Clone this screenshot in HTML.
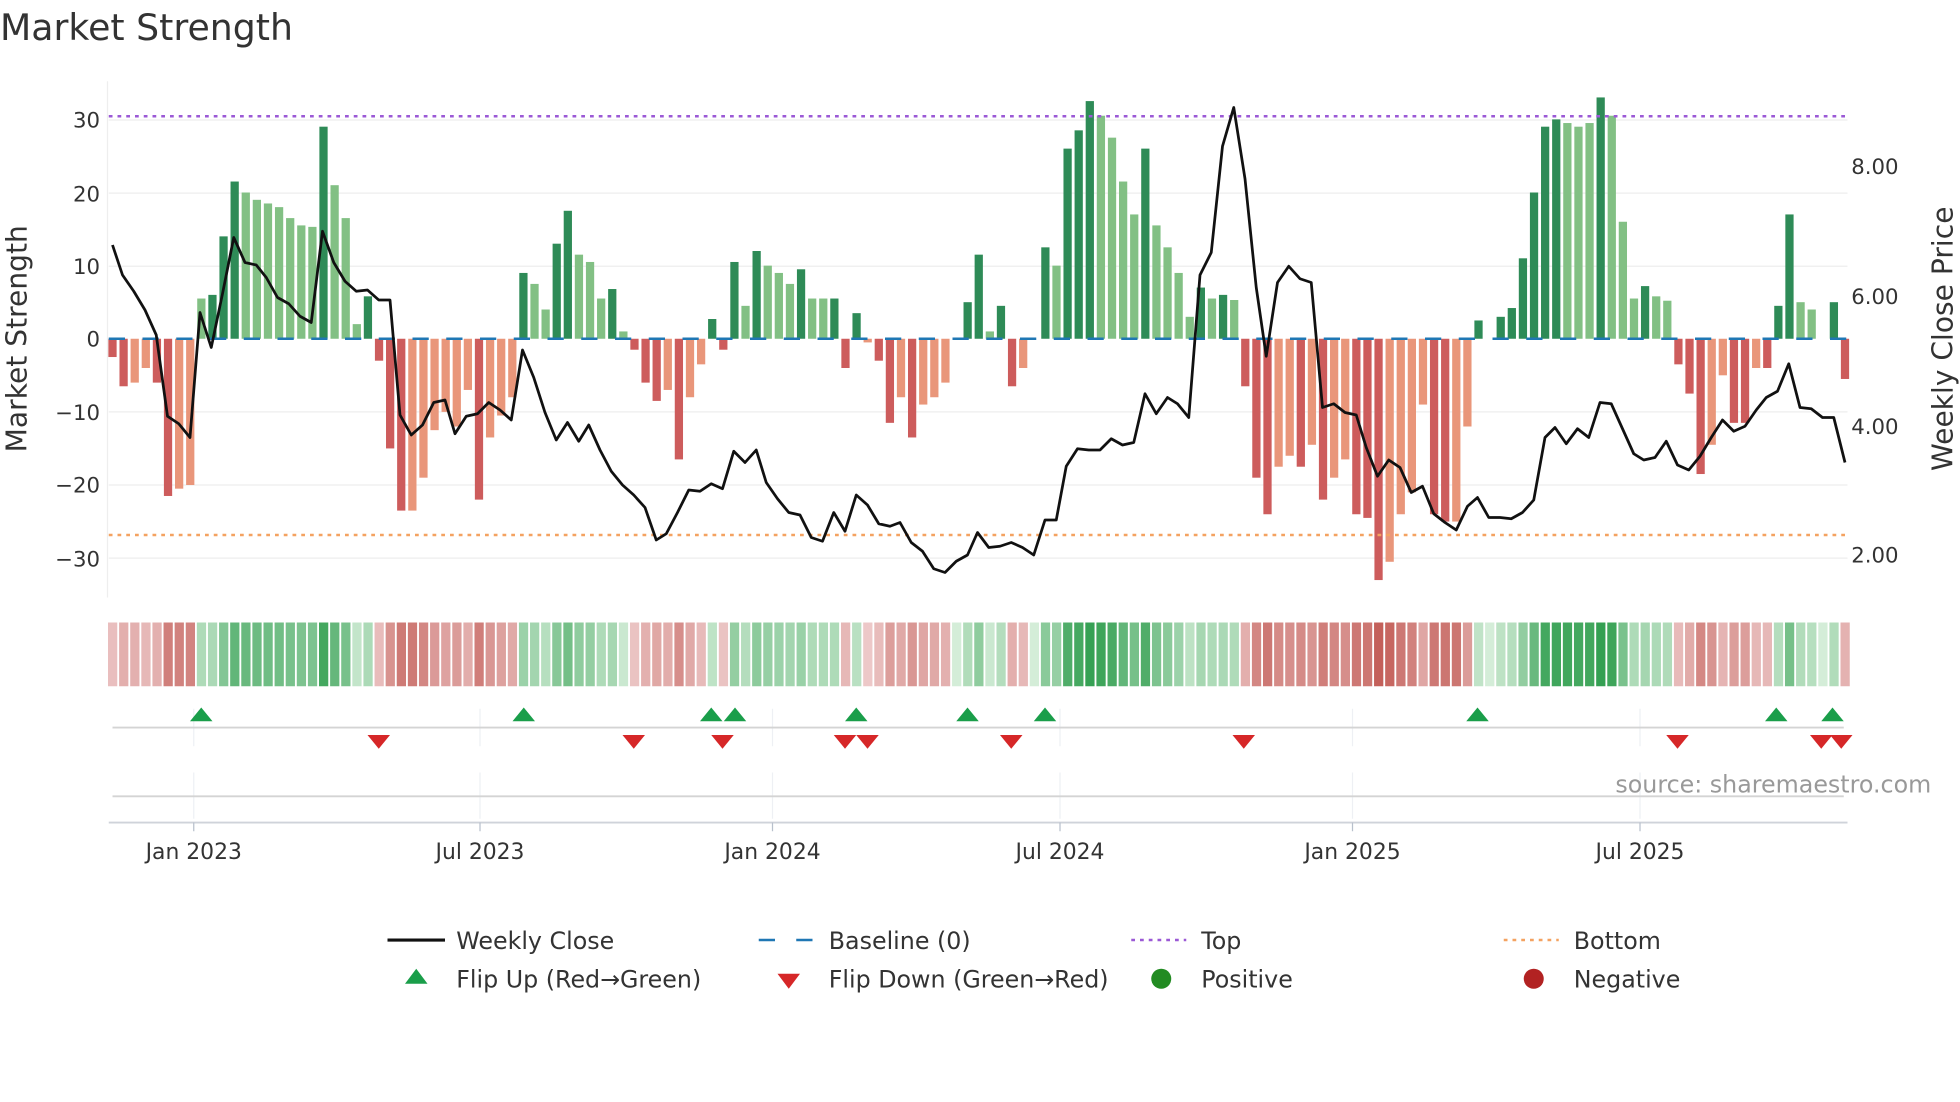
<!DOCTYPE html>
<html><head><meta charset="utf-8"><style>
html,body{margin:0;padding:0;background:#fff;}
svg{display:block;font-family:"DejaVu Sans","Liberation Sans",sans-serif;}
</style></head><body>
<svg id="s" width="1960" height="1102" viewBox="0 0 1568 881.6" xmlns="http://www.w3.org/2000/svg">
<rect width="1568" height="882" fill="#fff"/>
<text x="0" y="32" font-size="29" fill="#333">Market Strength</text>
<g stroke="#eeeeee" stroke-width="1">
<line x1="87" y1="96" x2="1478" y2="96"/><line x1="87" y1="154.5" x2="1478" y2="154.5"/><line x1="87" y1="213" x2="1478" y2="213"/>
<line x1="87" y1="329.5" x2="1478" y2="329.5"/><line x1="87" y1="388" x2="1478" y2="388"/><line x1="87" y1="446.5" x2="1478" y2="446.5"/>
</g>
<line x1="86" y1="65" x2="86" y2="478" stroke="#eeeeee"/>
<g font-size="17" fill="#333" text-anchor="end">
<text x="80" y="102">30</text><text x="80" y="161">20</text><text x="80" y="219">10</text><text x="80" y="277">0</text>
<text x="80" y="336">−10</text><text x="80" y="394">−20</text><text x="80" y="453">−30</text>
</g>
<g font-size="17" fill="#333">
<text x="1481" y="139">8.00</text><text x="1481" y="243">6.00</text><text x="1481" y="347">4.00</text><text x="1481" y="450">2.00</text>
</g>
<text transform="translate(21,271) rotate(-90)" font-size="22.5" fill="#333" text-anchor="middle">Market Strength</text>
<text transform="translate(1562,271) rotate(-90)" font-size="22.5" fill="#333" text-anchor="middle">Weekly Close Price</text>
<g id="bars"></g>
<line x1="87" y1="271" x2="1478" y2="271" stroke="#1f77b4" stroke-width="2" stroke-dasharray="13 14"/>
<line x1="87" y1="93" x2="1478" y2="93" stroke="#9b59d6" stroke-width="2" stroke-dasharray="3 4"/>
<line x1="87" y1="428" x2="1478" y2="428" stroke="#f4a261" stroke-width="2" stroke-dasharray="3 4"/>
<polyline id="pl" fill="none" stroke="#111" stroke-width="2.2" stroke-linejoin="round"/>
<g id="heat"></g>
<g stroke="#eef0f4" stroke-width="1">
<line x1="155" y1="567" x2="155" y2="597"/><line x1="384" y1="567" x2="384" y2="597"/><line x1="618" y1="567" x2="618" y2="597"/><line x1="848" y1="567" x2="848" y2="597"/><line x1="1082" y1="567" x2="1082" y2="597"/><line x1="1312" y1="567" x2="1312" y2="597"/>
<line x1="155" y1="618" x2="155" y2="655"/><line x1="384" y1="618" x2="384" y2="655"/><line x1="618" y1="618" x2="618" y2="655"/><line x1="848" y1="618" x2="848" y2="655"/><line x1="1082" y1="618" x2="1082" y2="655"/><line x1="1312" y1="618" x2="1312" y2="655"/>
</g>
<line x1="90" y1="582" x2="1475" y2="582" stroke="#d4d4d4" stroke-width="1.5"/>
<line x1="90" y1="637" x2="1475" y2="637" stroke="#d4d4d4" stroke-width="1.5"/>
<line x1="87" y1="658" x2="1478" y2="658" stroke="#cfd3da" stroke-width="1.5"/>
<g id="mk"></g>
<g stroke="#b8c0cc" stroke-width="1"><line x1="155" y1="658" x2="155" y2="665"/><line x1="384" y1="658" x2="384" y2="665"/><line x1="618" y1="658" x2="618" y2="665"/><line x1="848" y1="658" x2="848" y2="665"/><line x1="1082" y1="658" x2="1082" y2="665"/><line x1="1312" y1="658" x2="1312" y2="665"/></g>
<g font-size="17.5" fill="#333" text-anchor="middle">
<text x="155" y="687">Jan 2023</text><text x="384" y="687">Jul 2023</text><text x="618" y="687">Jan 2024</text><text x="848" y="687">Jul 2024</text><text x="1082" y="687">Jan 2025</text><text x="1312" y="687">Jul 2025</text>
</g>
<text x="1545" y="634" font-size="19" fill="#999" text-anchor="end">source: sharemaestro.com</text>
<g font-size="19" fill="#333">
<line x1="310" y1="752" x2="356" y2="752" stroke="#111" stroke-width="2.5"/><text x="365" y="759">Weekly Close</text>
<line x1="607" y1="752" x2="651" y2="752" stroke="#1f77b4" stroke-width="2" stroke-dasharray="13 17"/><text x="663" y="759">Baseline (0)</text>
<line x1="905" y1="752" x2="949" y2="752" stroke="#9b59d6" stroke-width="2" stroke-dasharray="3 4"/><text x="961" y="759">Top</text>
<line x1="1203" y1="752" x2="1247" y2="752" stroke="#f4a261" stroke-width="2" stroke-dasharray="3 4"/><text x="1259" y="759">Bottom</text>
<polygon points="333,775 342,787 324,787" fill="#1a9e4a"/><text x="365" y="790">Flip Up (Red→Green)</text>
<polygon points="622,779 640,779 631,791" fill="#d62728"/><text x="663" y="790">Flip Down (Green→Red)</text>
<circle cx="929" cy="783" r="8" fill="#228b22"/><text x="961" y="790">Positive</text>
<circle cx="1227" cy="783" r="8" fill="#b22222"/><text x="1259" y="790">Negative</text>
</g>
</svg>
<script>
var V=[-2.5,-6.5,-6,-4,-6,-21.5,-20.5,-20,5.5,6,14,21.5,20,19,18.5,18,16.5,15.5,15.3,29,21,16.5,2,5.8,-3,-15,-23.5,-23.5,-19,-12.5,-10,-12,-7,-22,-13.5,-10.5,-8,9,7.5,4,13,17.5,11.5,10.5,5.5,6.8,1,-1.5,-6,-8.5,-7,-16.5,-8,-3.5,2.7,-1.5,10.5,4.5,12,10,9,7.5,9.5,5.5,5.5,5.5,-4,3.5,-0.5,-3,-11.5,-8,-13.5,-9,-8,-6,0,5,11.5,1,4.5,-6.5,-4,0,12.5,10,26,28.5,32.5,30.5,27.5,21.5,17,26,15.5,12.5,9,3,7,5.5,6,5.3,-6.5,-19,-24,-17.5,-16,-17.5,-14.5,-22,-19,-16.5,-24,-24.5,-33,-30.5,-24,-21,-9,-24,-25,-25,-12,2.5,0,3,4.2,11,20,29,30,29.5,29,29.5,33,30.5,16,5.5,7.2,5.8,5.2,-3.5,-7.5,-18.5,-14.5,-5,-11.5,-11.5,-4,-4,4.5,17,5,4,0,5,-5.5];
var DF=[1,1,0,0,1,1,0,0,0,1,1,1,0,0,0,0,0,0,0,1,0,0,0,1,1,1,1,0,0,0,0,0,0,1,0,0,0,1,0,0,1,1,0,0,0,1,0,1,1,1,0,1,0,0,1,1,1,0,1,0,0,0,1,0,0,1,1,1,0,1,1,0,1,0,0,0,0,1,1,0,1,1,0,0,1,0,1,1,1,0,0,0,0,1,0,0,0,0,1,0,1,0,1,1,1,0,0,1,0,1,0,0,1,1,1,0,0,0,0,1,1,0,0,1,0,1,1,1,1,1,1,0,0,0,1,0,0,0,1,0,0,1,1,1,0,0,1,1,0,1,1,1,0,0,0,1,1];
var ns="http://www.w3.org/2000/svg",b=document.getElementById('bars'),h=document.getElementById('heat');
function R(p,x,y,w,hh,c){var r=document.createElementNS(ns,'rect');r.setAttribute('x',x);r.setAttribute('y',y);r.setAttribute('width',w);r.setAttribute('height',hh);r.setAttribute('fill',c);p.appendChild(r);}
function mix(a,c,t){var s='rgb(';for(var i=0;i<3;i++){s+=Math.round(a[i]+(c[i]-a[i])*t)+(i<2?',':')');}return s;}
var st=(1476-90)/156;
for(var i=0;i<V.length;i++){var v=V[i],x=90+i*st,d=DF[i];
 var c=v>=0?(d?'#2e8b57':'#82c084'):(d?'#cd5c5c':'#e9967a');
 var hh=Math.abs(v)*5.85; if(hh>0.3)R(b,x-3.3,v>=0?271-hh:271,6.6,hh,c);
 var t=Math.min(1,Math.abs(v)/33);
 var col=v>=0?mix([212,237,216],[52,160,82],Math.pow(t,0.8)):mix([238,204,204],[196,96,90],Math.pow(t,0.8));
 R(h,x-3.6,498,7.4,51,col);}
var P=[[90,196],[98,220],[107,233],[116,248],[125,268],[134,333],[143,339],[152,350],[160,250],[169,278],[178,235],[187,190],[196,210],[205,212],[213,222],[222,238],[231,243],[240,253],[249,258],[258,185],[267,210],[276,225],[285,233],[294,232],[303,240],[312,240],[320,332],[329,348],[338,340],[347,322],[356,320],[364,347],[373,333],[382,331],[391,322],[400,328],[409,336],[418,280],[427,302],[436,330],[445,352],[454,338],[463,353],[471,340],[480,360],[489,377],[498,388],[507,396],[516,406],[525,432],[533,427],[542,410],[551,392],[560,393],[569,387],[578,391],[587,361],[596,370],[605,360],[613,386],[622,399],[631,410],[640,412],[649,430],[658,433],[667,410],[676,425],[685,396],[694,404],[703,419],[712,421],[720,418],[729,434],[738,441],[747,455],[756,458],[765,449],[774,444],[782,426],[791,438],[800,437],[809,434],[818,438],[827,444],[836,416],[845,416],[853,373],[862,359],[871,360],[880,360],[889,351],[898,356],[907,354],[916,315],[925,331],[934,318],[942,323],[951,334],[960,220],[969,202],[978,117],[987,86],[996,143],[1005,230],[1013,285],[1022,226],[1031,213],[1040,223],[1049,226],[1058,326],[1067,323],[1076,330],[1085,332],[1093,358],[1102,381],[1111,368],[1120,374],[1129,394],[1138,389],[1147,411],[1156,418],[1165,424],[1174,405],[1182,398],[1191,414],[1200,414],[1209,415],[1218,410],[1227,400],[1236,350],[1244,342],[1253,355],[1262,343],[1271,350],[1280,322],[1289,323],[1298,343],[1307,363],[1315,368],[1324,366],[1333,353],[1342,372],[1351,376],[1360,365],[1369,350],[1378,336],[1387,345],[1396,341],[1405,328],[1413,318],[1422,313],[1431,291],[1440,326],[1449,327],[1458,334],[1467,334],[1476,370]];
document.getElementById('pl').setAttribute('points',P.map(function(p){return p.join(',')}).join(' '));
var mk=document.getElementById('mk'),U=[161,419,569,588,685,774,836,1182,1421,1466],D=[303,507,578,676,694,809,995,1342,1457,1473];
function T(x,up){var p=document.createElementNS(ns,'polygon');p.setAttribute('points',up?(x+','+566+' '+(x+9)+',577 '+(x-9)+',577'):((x-9)+',588 '+(x+9)+',588 '+x+',599'));p.setAttribute('fill',up?'#1a9e4a':'#d62728');mk.appendChild(p);}
U.forEach(function(x){T(x,1)});D.forEach(function(x){T(x,0)});
</script>
</body></html>
